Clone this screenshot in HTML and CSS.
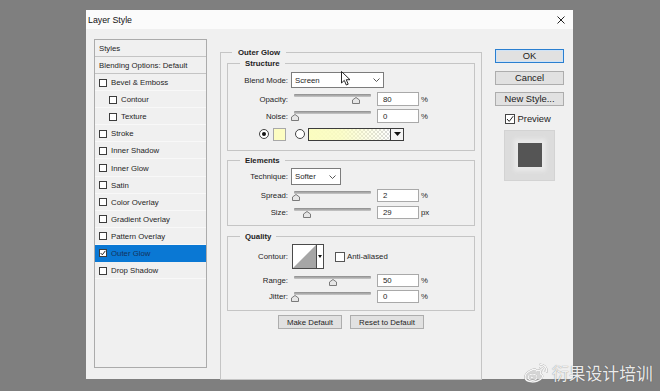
FILE: index.html
```html
<!DOCTYPE html>
<html>
<head>
<meta charset="utf-8">
<title>Layer Style</title>
<link rel="stylesheet" href="styles.css">
</head>
<body>
<div class="dialog">
  <div class="titlebar">
    <span class="title">Layer Style</span>
    <svg class="close" width="8" height="8" viewBox="0 0 8 8"><path d="M0.5 0.5 L7.5 7.5 M7.5 0.5 L0.5 7.5" stroke="#222" stroke-width="1"/></svg>
  </div>
  <div class="main">
    <div class="styles-list">
      <div class="item head">Styles</div>
      <div class="item head">Blending Options: Default</div>
      <div class="item"><span class="cb"></span>Bevel &amp; Emboss</div>
      <div class="item sub"><span class="cb"></span>Contour</div>
      <div class="item sub"><span class="cb"></span>Texture</div>
      <div class="item"><span class="cb"></span>Stroke</div>
      <div class="item"><span class="cb"></span>Inner Shadow</div>
      <div class="item"><span class="cb"></span>Inner Glow</div>
      <div class="item"><span class="cb"></span>Satin</div>
      <div class="item"><span class="cb"></span>Color Overlay</div>
      <div class="item"><span class="cb"></span>Gradient Overlay</div>
      <div class="item"><span class="cb"></span>Pattern Overlay</div>
      <div class="item selected"><span class="cb"><svg width="6" height="6" viewBox="0 0 6 6"><path d="M0.6 3 L2.3 4.8 L5.4 0.8" fill="none" stroke="#222" stroke-width="1"/></svg></span>Outer Glow</div>
      <div class="item"><span class="cb"></span>Drop Shadow</div>
    </div>

    <div class="group outer">
      <span class="legend">Outer Glow</span>

      <div class="group structure">
        <span class="legend">Structure</span>
        <div class="row h16 mt3">
          <span class="lbl">Blend Mode:</span>
          <div class="select wide"><span>Screen</span><svg width="7" height="4" viewBox="0 0 7 4"><path d="M0.5 0.5 L3.5 3.5 L6.5 0.5" fill="none" stroke="#444" stroke-width="0.9"/></svg></div>
        </div>
        <div class="row h14 mt4">
          <span class="lbl">Opacity:</span>
          <div class="slider"><div class="track"></div><svg class="thumb" style="left:80%" width="8" height="7" viewBox="0 0 8 7"><path d="M4 0.5 L7.5 3 L7.5 6.5 L0.5 6.5 L0.5 3 Z" fill="#e6e6e6" stroke="#7a7a7a" stroke-width="1"/></svg></div>
          <div class="num">80</div><span class="unit">%</span>
        </div>
        <div class="row h14 mt3">
          <span class="lbl">Noise:</span>
          <div class="slider"><div class="track"></div><svg class="thumb" style="left:1%" width="8" height="7" viewBox="0 0 8 7"><path d="M4 0.5 L7.5 3 L7.5 6.5 L0.5 6.5 L0.5 3 Z" fill="#e6e6e6" stroke="#7a7a7a" stroke-width="1"/></svg></div>
          <div class="num">0</div><span class="unit">%</span>
        </div>
        <div class="row h14 mt4 color-row">
          <span class="radio on"></span>
          <span class="swatch"></span>
          <span class="radio second"></span>
          <div class="gradient"><span class="grad-fill"></span><span class="grad-btn"><svg width="7" height="4" viewBox="0 0 7 4"><path d="M0 0 L7 0 L3.5 4 Z" fill="#111"/></svg></span></div>
        </div>
      </div>

      <div class="group elements">
        <span class="legend">Elements</span>
        <div class="row h17 mt2">
          <span class="lbl">Technique:</span>
          <div class="select narrow"><span>Softer</span><svg width="7" height="4" viewBox="0 0 7 4"><path d="M0.5 0.5 L3.5 3.5 L6.5 0.5" fill="none" stroke="#444" stroke-width="0.9"/></svg></div>
        </div>
        <div class="row h13 mt4">
          <span class="lbl">Spread:</span>
          <div class="slider"><div class="track"></div><svg class="thumb" style="left:2.5%" width="8" height="7" viewBox="0 0 8 7"><path d="M4 0.5 L7.5 3 L7.5 6.5 L0.5 6.5 L0.5 3 Z" fill="#e6e6e6" stroke="#7a7a7a" stroke-width="1"/></svg></div>
          <div class="num">2</div><span class="unit">%</span>
        </div>
        <div class="row h13 mt4">
          <span class="lbl">Size:</span>
          <div class="slider"><div class="track"></div><svg class="thumb" style="left:17%" width="8" height="7" viewBox="0 0 8 7"><path d="M4 0.5 L7.5 3 L7.5 6.5 L0.5 6.5 L0.5 3 Z" fill="#e6e6e6" stroke="#7a7a7a" stroke-width="1"/></svg></div>
          <div class="num">29</div><span class="unit">px</span>
        </div>
      </div>

      <div class="group quality">
        <span class="legend">Quality</span>
        <div class="row h25 mt2">
          <span class="lbl">Contour:</span>
          <div class="contour">
            <span class="contour-pic"><svg width="23" height="23" viewBox="0 0 23 23"><path d="M0 23 L23 0 L23 23 Z" fill="#a6a6a6"/></svg></span>
            <span class="contour-btn"><svg width="4" height="3" viewBox="0 0 4 3"><path d="M0 0 L4 0 L2 3 Z" fill="#111"/></svg></span>
          </div>
          <span class="cb aa"></span><span class="aa-text">Anti-aliased</span>
        </div>
        <div class="row h13 mt5">
          <span class="lbl">Range:</span>
          <div class="slider"><div class="track"></div><svg class="thumb" style="left:50%" width="8" height="7" viewBox="0 0 8 7"><path d="M4 0.5 L7.5 3 L7.5 6.5 L0.5 6.5 L0.5 3 Z" fill="#e6e6e6" stroke="#7a7a7a" stroke-width="1"/></svg></div>
          <div class="num">50</div><span class="unit">%</span>
        </div>
        <div class="row h13 mt3">
          <span class="lbl">Jitter:</span>
          <div class="slider"><div class="track"></div><svg class="thumb" style="left:1%" width="8" height="7" viewBox="0 0 8 7"><path d="M4 0.5 L7.5 3 L7.5 6.5 L0.5 6.5 L0.5 3 Z" fill="#e6e6e6" stroke="#7a7a7a" stroke-width="1"/></svg></div>
          <div class="num">0</div><span class="unit">%</span>
        </div>
      </div>

      <div class="btnrow">
        <button class="btn make">Make Default</button>
        <button class="btn reset">Reset to Default</button>
      </div>
    </div>

    <div class="side">
      <button class="rbtn ok">OK</button>
      <button class="rbtn">Cancel</button>
      <button class="rbtn">New Style...</button>
      <div class="preview-check">
        <span class="pcb"><svg width="8" height="8" viewBox="0 0 8 8"><path d="M1 4 L3.2 6.4 L7.2 1.2" fill="none" stroke="#222" stroke-width="1"/></svg></span>
        <span>Preview</span>
      </div>
      <div class="preview-box"><span class="preview-square"></span></div>
    </div>
  </div>
</div>

<svg class="cursor" width="10" height="16" viewBox="0 0 10 16"><path d="M0.5 0.5 L0.5 12 L3.3 9.4 L5.3 14 L7.2 13.2 L5.3 8.7 L9 8.7 Z" fill="#fff" stroke="#111" stroke-width="0.9" stroke-linejoin="round"/></svg>

<div class="watermark">
  <svg class="weibo" width="26" height="21" viewBox="0 0 26 21">
    <path d="M10 7.5 C4.5 9.5 1.5 13 2.2 16 C3 19.8 9.5 20.8 14.5 19 C19.5 17.2 20.6 13.6 18.3 12.4 C17.4 12 17.2 11.4 17.6 10.5 C18.3 8.6 16.4 7.6 13.2 9 C13.4 7.4 12.3 6.9 10 7.5 Z" fill="rgba(255,255,255,0.3)" stroke="#f6f6f6" stroke-width="1.5"/>
    <ellipse cx="9.6" cy="15.2" rx="4.4" ry="3.1" fill="none" stroke="#f6f6f6" stroke-width="1.3"/>
    <circle cx="8.8" cy="15.4" r="1.2" fill="#f6f6f6"/>
    <path d="M17 2.5 A6.5 6.5 0 0 1 23.8 10" fill="none" stroke="#f6f6f6" stroke-width="1.6" stroke-linecap="round"/>
    <path d="M17.2 5.8 A3.3 3.3 0 0 1 20.6 9.4" fill="none" stroke="#f6f6f6" stroke-width="1.4" stroke-linecap="round"/>
  </svg>
  <span class="wm-text">衍果设计培训</span>
</div>
</body>
</html>
```

FILE: styles.css
```css
html, body {
  margin: 0;
  padding: 0;
}
body {
  width: 660px;
  height: 391px;
  background: #7f7f7f;
  font-family: "Liberation Sans", Arial, sans-serif;
  font-size: 7.8px;
  color: #1e1e1e;
  position: relative;
  overflow: hidden;
}
.dialog {
  position: relative;
  margin: 10px 0 0 86px;
  width: 487px;
  height: 369px;
  background: #f0f0f0;
  box-sizing: border-box;
}
.titlebar {
  height: 19px;
  background: #fbfbfb;
  display: flex;
  align-items: center;
  justify-content: space-between;
  padding: 0 8px 0 2px;
}
.title {
  font-size: 8.8px;
  color: #111;
}
.close {
  display: block;
}
.main {
  display: flex;
  align-items: flex-start;
  padding: 10px 9px 0 8px;
}

/* left styles list */
.styles-list {
  width: 113px;
  height: 329px;
  box-sizing: border-box;
  border: 1px solid #ababab;
  flex: none;
}
.item {
  height: 17.1px;
  display: flex;
  align-items: center;
  padding-left: 4px;
  box-sizing: border-box;
  box-shadow: inset 0 -1px #f8f8f8;
  white-space: nowrap;
}
.item.head {
  height: 17px;
  border-bottom: 1px solid #c4c4c4;
  box-shadow: none;
}
.item.sub {
  padding-left: 14px;
}
.item.selected {
  background: #0a78d4;
  color: #14335c;
  box-shadow: none;
}
.cb {
  width: 8px;
  height: 8px;
  box-sizing: border-box;
  border: 1px solid #3c3c3c;
  background: #fff;
  margin-right: 4px;
  flex: none;
  display: flex;
  align-items: center;
  justify-content: center;
}

/* groups */
.group {
  border: 1px solid #c5c5c5;
  box-sizing: border-box;
}
.legend {
  display: block;
  width: fit-content;
  height: 11px;
  line-height: 11px;
  margin: -6px 0 0 12px;
  padding: 0 5px;
  background: #f0f0f0;
  font-weight: bold;
}
.outer {
  margin: 13px 0 0 13px;
  width: 262px;
  height: 328px;
  padding: 0 6px;
  flex: none;
}
.outer > .legend {
  margin-left: 5px;
  padding: 0 6px;
}
.structure {
  margin-top: 5px;
  padding-bottom: 9px;
}
.elements {
  margin-top: 9px;
  padding-bottom: 6px;
}
.quality {
  margin-top: 10px;
  padding-bottom: 7px;
}

/* rows */
.row {
  display: flex;
  align-items: center;
}
.h13 { height: 13px; }
.h14 { height: 14px; }
.h16 { height: 16px; }
.h17 { height: 17px; }
.h25 { height: 25px; }
.mt2 { margin-top: 2px; }
.mt3 { margin-top: 3px; }
.mt4 { margin-top: 4px; }
.mt5 { margin-top: 5px; }
.lbl {
  width: 60px;
  flex: none;
  text-align: right;
  white-space: nowrap;
}
.select {
  margin-left: 3px;
  height: 100%;
  box-sizing: border-box;
  border: 1px solid #7c7c7c;
  background: #fff;
  display: flex;
  align-items: center;
  justify-content: space-between;
  padding: 0 3px 0 3px;
}
.select.wide { width: 93px; }
.select.narrow { width: 50px; padding-right: 4px; }

.slider {
  position: relative;
  width: 77px;
  height: 100%;
  margin-left: 6px;
  flex: none;
}
.track {
  height: 3px;
  margin-top: 2px;
  border-radius: 1px;
  background: linear-gradient(#8c8c8c, #c9c9c9);
}
.thumb {
  position: absolute;
  top: 5px;
  margin-left: -4px;
  display: block;
}
.num {
  width: 42px;
  height: 100%;
  margin-left: 6px;
  box-sizing: border-box;
  border: 1px solid #a9a9a9;
  background: #fff;
  padding-left: 5px;
  display: flex;
  align-items: center;
  flex: none;
}
.unit {
  margin-left: 2px;
}

/* color row */
.color-row {
  padding-left: 31px;
}
.radio {
  width: 10px;
  height: 10px;
  box-sizing: border-box;
  border: 1px solid #444;
  border-radius: 50%;
  background: #fff;
  flex: none;
  display: flex;
  align-items: center;
  justify-content: center;
}
.radio.on::after {
  content: "";
  width: 4px;
  height: 4px;
  border-radius: 50%;
  background: #111;
}
.radio.second {
  margin-left: 9px;
}
.swatch {
  width: 13px;
  height: 13px;
  margin-left: 4px;
  box-sizing: border-box;
  border: 1px solid #a8a8a8;
  background: #fdfdc2;
  flex: none;
}
.gradient {
  width: 96px;
  height: 13px;
  margin-left: 3px;
  box-sizing: border-box;
  border: 1px solid #3c3c3c;
  display: flex;
  flex: none;
}
.grad-fill {
  flex: 1;
  background:
    linear-gradient(to right, #fbfdc0 0%, rgba(251,253,192,0.85) 40%, rgba(251,253,192,0) 100%),
    repeating-conic-gradient(#d9d9d9 0 25%, #ffffff 0 50%) 0 0 / 4px 4px;
}
.grad-btn {
  width: 12px;
  border-left: 1px solid #3c3c3c;
  background: #f4f4f4;
  display: flex;
  align-items: center;
  justify-content: center;
}

/* contour */
.contour {
  margin-left: 4px;
  width: 32px;
  height: 25px;
  box-sizing: border-box;
  border: 1px solid #4a4a4a;
  background: #fff;
  display: flex;
  flex: none;
}
.contour-pic {
  width: 23px;
  height: 23px;
  display: block;
}
.contour-pic svg { display: block; }
.contour-btn {
  flex: 1;
  border-left: 1px solid #4a4a4a;
  background: #fff;
  display: flex;
  align-items: center;
  justify-content: center;
}
.cb.aa {
  width: 10px;
  height: 10px;
  margin: 0 0 0 11px;
  border-color: #555;
}
.aa-text {
  margin-left: 2px;
}

/* buttons */
.btnrow {
  display: flex;
  justify-content: center;
  gap: 8px;
  margin-top: 4px;
}
.btn {
  height: 14px;
  box-sizing: border-box;
  border: 1px solid #adadad;
  background: #e1e1e1;
  font-family: inherit;
  font-size: 7.8px;
  color: #1e1e1e;
  padding: 0;
  margin: 0;
}
.btn.make { width: 64px; }
.btn.reset { width: 74px; }

/* right side */
.side {
  width: 69px;
  margin: 10px 0 0 13px;
  flex: none;
  display: flex;
  flex-direction: column;
}
.rbtn {
  width: 69px;
  height: 14px;
  box-sizing: border-box;
  border: 1px solid #adadad;
  background: #e1e1e1;
  font-family: inherit;
  font-size: 9.4px;
  color: #1a1a1a;
  padding: 0;
  margin: 0 0 7.5px 0;
  line-height: 12px;
}
.rbtn.ok {
  border-color: #2a7fd0;
  box-shadow: inset 0 0 0 1px #cfe3f7;
}
.preview-check {
  display: flex;
  align-items: center;
  margin: 0 0 0 10px;
  height: 10px;
  font-size: 9.4px;
}
.pcb {
  width: 10px;
  height: 10px;
  box-sizing: border-box;
  border: 1px solid #444;
  background: #fff;
  margin-right: 2.5px;
  display: flex;
  align-items: center;
  justify-content: center;
  flex: none;
}
.preview-box {
  margin: 6px 0 0 9px;
  width: 51px;
  height: 51px;
  box-sizing: border-box;
  border: 1px solid #d3d3d3;
  background: #dcdcdc;
  display: flex;
  align-items: center;
  justify-content: center;
}
.preview-square {
  width: 24px;
  height: 24px;
  background: #555555;
  box-shadow: 0 0 4px 4px #eaeaea;
}

/* mouse cursor over the blend mode menu */
.cursor {
  position: absolute;
  left: 341px;
  top: 71px;
  display: block;
}

/* watermark */
.watermark {
  position: absolute;
  left: 523px;
  top: 362px;
  display: flex;
  align-items: center;
  gap: 3px;
  color: rgba(250,250,250,0.92);
}
.weibo {
  display: block;
  filter: drop-shadow(0 0 0.7px rgba(60,60,60,0.8));
}
.wm-text {
  font-family: "Noto Sans CJK SC", sans-serif;
  font-size: 16.8px;
  line-height: 20px;
  text-shadow: 0 0 1px rgba(60,60,60,0.7);
}
```
